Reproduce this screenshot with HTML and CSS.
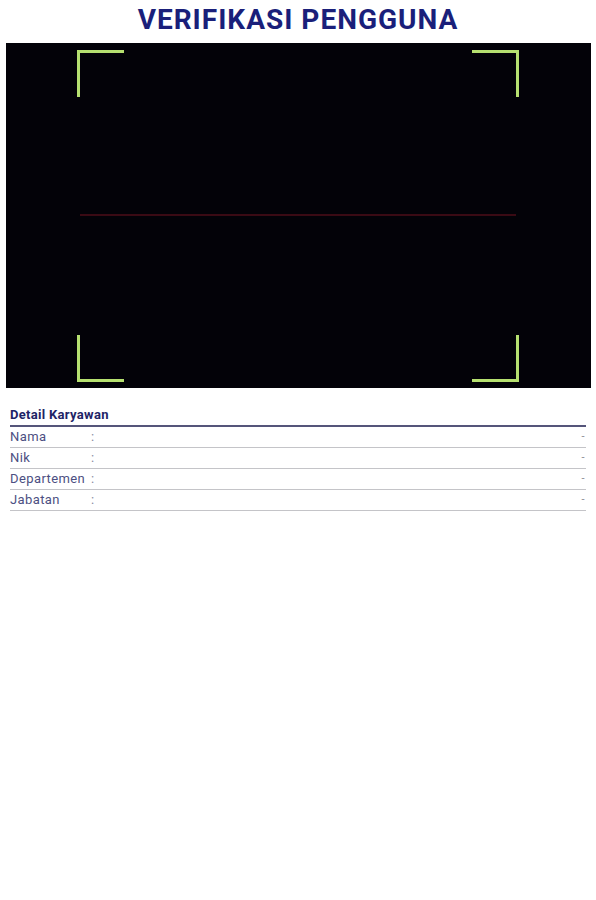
FILE: index.html
```html
<!DOCTYPE html>
<html>
<head>
<meta charset="utf-8">
<link rel="stylesheet" href="styles.css">
</head>
<body>
<h1 class="title">VERIFIKASI PENGGUNA</h1>
<div class="camera">
  <div class="frame">
    <span class="corner tl"></span>
    <span class="corner tr"></span>
    <span class="corner bl"></span>
    <span class="corner br"></span>
    <div class="scanline"></div>
  </div>
</div>
<div class="detail">
  <div class="detail-head">Detail Karyawan</div>
  <div class="row"><span class="label">Nama</span><span class="colon">:</span><span class="value">-</span></div>
  <div class="row"><span class="label">Nik</span><span class="colon">:</span><span class="value">-</span></div>
  <div class="row"><span class="label">Departemen</span><span class="colon">:</span><span class="value">-</span></div>
  <div class="row"><span class="label">Jabatan</span><span class="colon">:</span><span class="value">-</span></div>
</div>
</body>
</html>
```
FILE: styles.css
```css
html, body {
  margin: 0;
  padding: 0;
  background: #ffffff;
  font-family: Roboto, "Liberation Sans", Arial, sans-serif;
}
.title {
  margin: 0;
  height: 43px;
  line-height: 40px;
  text-align: center;
  font-size: 28px;
  font-weight: 700;
  color: #1a1f7a;
  letter-spacing: 1px;
}
.camera {
  margin: 0 5px 0 6px;
  height: 345px;
  background: #030208;
  display: flex;
  padding: 7px 72px 6px 71px;
  box-sizing: border-box;
}
.frame {
  position: relative;
  flex: 1;
  display: flex;
  align-items: center;
}
.corner {
  position: absolute;
  box-sizing: border-box;
  width: 47px;
  height: 47px;
  border-color: #b6e070;
  border-style: solid;
  border-width: 0;
}
.corner.tl { top: 0; left: 0; border-top-width: 3px; border-left-width: 3px; }
.corner.tr { top: 0; right: 0; border-top-width: 3px; border-right-width: 3px; }
.corner.bl { bottom: 0; left: 0; border-bottom-width: 3px; border-left-width: 3px; }
.corner.br { bottom: 0; right: 0; border-bottom-width: 3px; border-right-width: 3px; }
.scanline {
  flex: 1;
  margin: -2px 3px 0;
  height: 2px;
  background: #3a0a14;
}
.detail {
  padding: 0 10px;
  margin-top: 19px;
}
.detail-head {
  font-size: 13px;
  font-weight: 700;
  color: #1e2466;
  line-height: 16px;
  letter-spacing: 0.3px;
  padding-bottom: 2px;
  border-bottom: 2px solid #55557a;
}
.row {
  display: flex;
  font-size: 13px;
  letter-spacing: 0.4px;
  color: #4c4f82;
  height: 20px;
  line-height: 20px;
  border-bottom: 1px solid #c4c4c8;
}
.label {
  width: 81px;
}
.colon {
  color: #8a8aa0;
}
.value {
  margin-left: auto;
  color: #8a8a95;
  font-size: 11px;
  padding-right: 1px;
}
```
